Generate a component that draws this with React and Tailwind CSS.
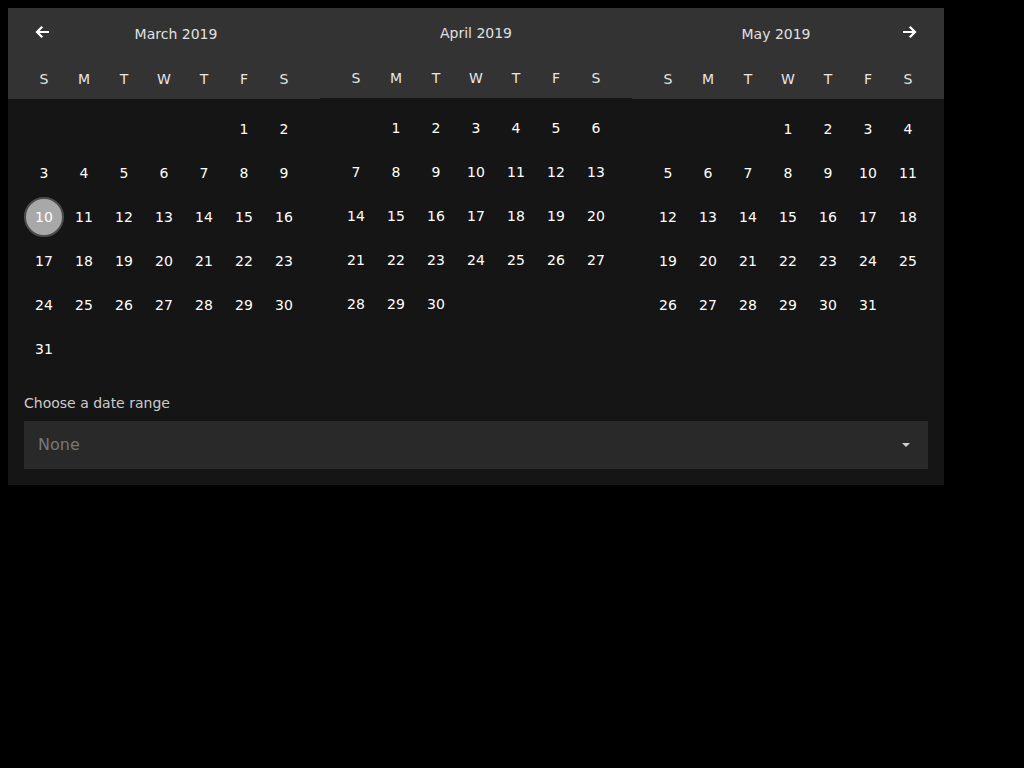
import React from "react";

const WEEK = ["S", "M", "T", "W", "T", "F", "S"];

function buildWeeks(offset, days) {
  const cells = [];
  for (let i = 0; i < offset; i++) cells.push(null);
  for (let d = 1; d <= days; d++) cells.push(d);
  while (cells.length % 7 !== 0) cells.push(null);
  const weeks = [];
  for (let i = 0; i < cells.length; i += 7) weeks.push(cells.slice(i, i + 7));
  return weeks;
}

function Arrow({ dir }) {
  return (
    <svg width="14" height="12" viewBox="0 0 14 12" fill="none" stroke="#ffffff" strokeWidth="2.2" strokeLinecap="square">
      {dir === "left" ? (
        <path d="M13 6H2.5M6.5 1.5L2 6l4.5 4.5" />
      ) : (
        <path d="M1 6h10.5M7.5 1.5L12 6l-4.5 4.5" />
      )}
    </svg>
  );
}

function Month({ title, offset, days, selected, left, right, shift }) {
  const weeks = buildWeeks(offset, days);
  return (
    <div className={"w-[312px] flex flex-col " + (shift ? "-mt-px" : "")}>
      <div className="bg-[#333333] h-[91px] flex flex-col">
        <div className="h-[52px] px-[22px] flex items-center">
          {left && (
            <div className="w-6 h-6 flex items-center justify-center -mt-[4px]">
              <Arrow dir="left" />
            </div>
          )}
          <div className="flex-1 text-center text-[14px] text-[#e0e0e0] leading-5">
            {title}
          </div>
          {right && (
            <div className="w-6 h-6 flex items-center justify-center -mt-[4px]">
              <Arrow dir="right" />
            </div>
          )}
        </div>
        <div className="h-[38px] px-4 grid grid-cols-7 items-center">
          {WEEK.map((w, i) => (
            <div key={i} className="text-center text-[14px] text-[#e6e6e6] leading-5">
              {w}
            </div>
          ))}
        </div>
      </div>
      <div className="px-4 pt-[8px]">
        {weeks.map((wk, wi) => (
          <div key={wi} className="grid grid-cols-7 h-[44px] items-center">
            {wk.map((d, di) => (
              <div key={di} className="flex justify-center">
                {d === null ? (
                  <div className="w-10 h-10" />
                ) : d === selected ? (
                  <div className="w-10 h-10 rounded-full bg-[#a8a8a8] border-2 border-[#4d4d4d] flex items-center justify-center text-[14px] text-white">
                    {d}
                  </div>
                ) : (
                  <div className="w-10 h-10 flex items-center justify-center text-[14px] text-white">
                    {d}
                  </div>
                )}
              </div>
            ))}
          </div>
        ))}
      </div>
    </div>
  );
}

export default function App() {
  return (
    <div
      className="min-h-screen bg-black p-2"
      style={{ fontFamily: '"DejaVu Sans", sans-serif' }}
    >
      <div className="w-[936px] bg-[#151515] overflow-hidden pb-4">
        <div className="flex">
          <Month title="March 2019" offset={5} days={31} selected={10} left />
          <Month title="April 2019" offset={1} days={30} shift />
          <Month title="May 2019" offset={3} days={31} right />
        </div>
        <div className="px-4">
          <div className="mt-[23px] text-[14px] leading-[18px] text-[#cccccc]">
            Choose a date range
          </div>
          <div className="mt-[9px] h-12 bg-[#292929] flex items-center pl-[14px] pr-[17px]">
            <div className="flex-1 text-[16px] text-[#777777]">None</div>
            <svg width="10" height="6" viewBox="0 0 10 6">
              <path d="M1 1h8L5 5z" fill="#d0d0d0" />
            </svg>
          </div>
        </div>
      </div>
    </div>
  );
}
